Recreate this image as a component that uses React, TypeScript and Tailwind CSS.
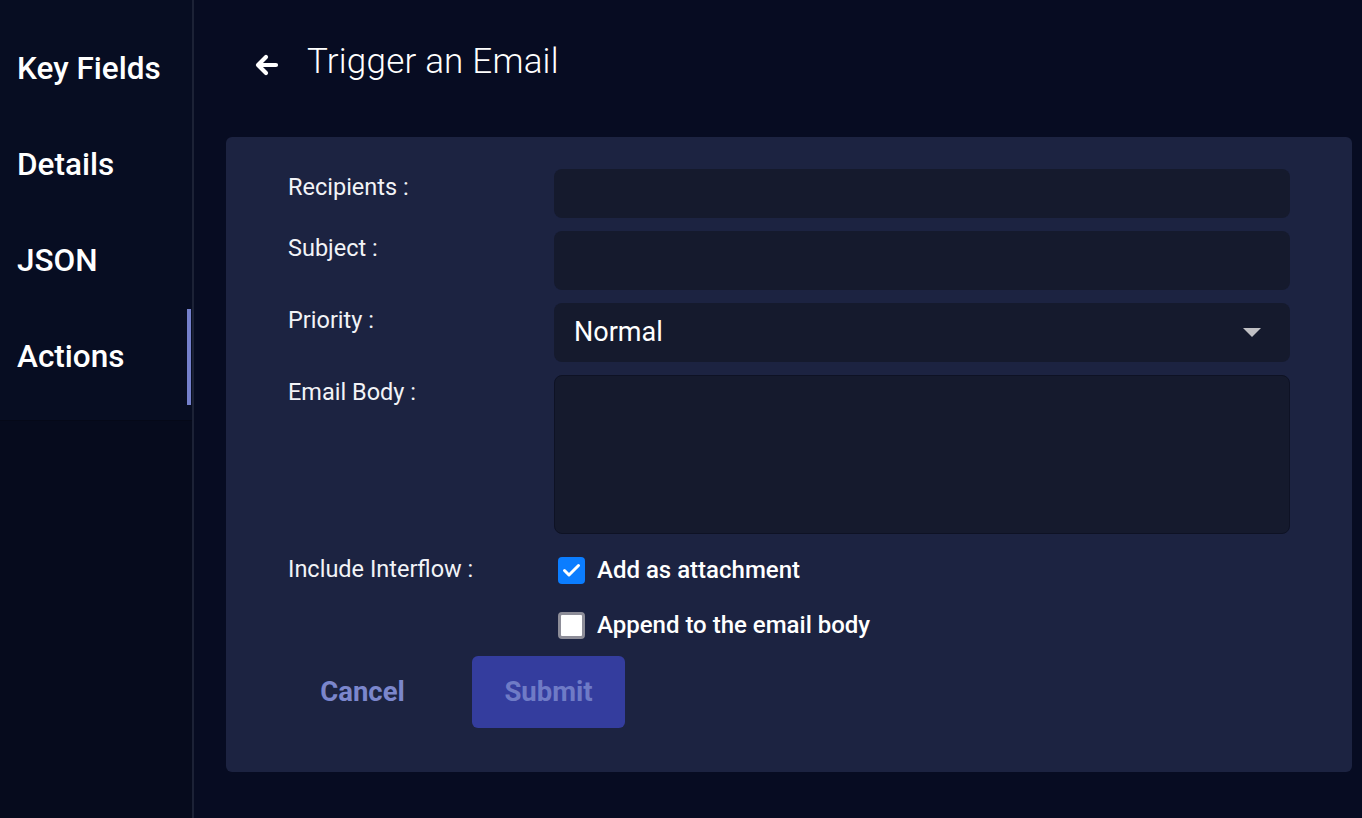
import React, { useState } from 'react';

const navItems = ['Key Fields', 'Details', 'JSON', 'Actions'];

function Check({ checked }: { checked: boolean }) {
  if (checked) {
    return (
      <span className="flex h-[27px] w-[27px] items-center justify-center rounded-[4px] bg-[#0b7dff]">
        <svg width="19" height="15" viewBox="0 0 19 15">
          <path d="M2.5 7.5 L7 12 L16.5 2.5" stroke="white" strokeWidth="3" fill="none" strokeLinecap="round" strokeLinejoin="round" />
        </svg>
      </span>
    );
  }
  return <span className="h-[27px] w-[27px] rounded-[4px] border-[3px] border-[#8d8d98] bg-white" />;
}

export default function App() {
  const [active, setActive] = useState('Actions');
  const [attach, setAttach] = useState(true);
  const [append, setAppend] = useState(false);

  return (
    <div className="flex min-h-[818px] w-full bg-[#070c22] text-white" style={{ fontFamily: 'Roboto, "Liberation Sans", sans-serif' }}>
      {/* Sidebar */}
      <aside className="w-[194px] shrink-0 border-r-2 border-[#1c2236] bg-[#060b1d]">
        <nav className="bg-[#070d22] pt-[21px] pb-[15px] border-b border-[#050918]">
          {navItems.map((item) => (
            <button
              key={item}
              onClick={() => setActive(item)}
              className="relative flex h-[96px] w-full items-center pl-[17px] text-left text-[31.5px] font-medium text-white"
            >
              {item}
              {active === item && (
                <span className="absolute right-[1px] top-0 h-full w-[4px] bg-[#7480cc]" />
              )}
            </button>
          ))}
        </nav>
      </aside>

      {/* Main */}
      <main className="flex-1 pl-[32px] pr-[10px]">
        <div className="mb-[15px] flex h-[122px] items-center pl-[29px] pt-[2px]">
          <svg width="24" height="22" viewBox="0 0 24 22" className="mt-[6px]">
            <path d="M11 3 L3 11 L11 19 M3.5 11 H21" stroke="white" strokeWidth="4.2" fill="none" strokeLinecap="round" strokeLinejoin="round" />
          </svg>
          <h1 className="ml-[28px] text-[35px] font-light tracking-[0.2px] text-white">Trigger an Email</h1>
        </div>

        <section className="rounded-[6px] bg-[#1c2341] px-[62px] pt-[32px] pb-[44px]">
          <div className="flex flex-col gap-[13px]">
            <div className="flex">
              <label className="w-[266px] shrink-0 pt-[5px] text-[23.5px] leading-[26px] text-[#f2f3f7]">Recipients :</label>
              <input className="h-[49px] flex-1 rounded-[8px] bg-[#151a2d] px-[20px] text-[22px] text-white outline-none" />
            </div>
            <div className="flex">
              <label className="w-[266px] shrink-0 pt-[4px] text-[23.5px] leading-[26px] text-[#f2f3f7]">Subject :</label>
              <input className="h-[59px] flex-1 rounded-[8px] bg-[#151a2d] px-[20px] text-[22px] text-white outline-none" />
            </div>
            <div className="flex">
              <label className="w-[266px] shrink-0 pt-[4px] text-[23.5px] leading-[26px] text-[#f2f3f7]">Priority :</label>
              <div className="flex h-[59px] flex-1 items-center justify-between rounded-[8px] bg-[#151a2d] pl-[20px] pr-[29px]">
                <span className="text-[27px] font-normal text-white">Normal</span>
                <svg width="18" height="9" viewBox="0 0 18 9">
                  <path d="M0 0 H18 L9 9 Z" fill="#c0c0c4" />
                </svg>
              </div>
            </div>
            <div className="flex">
              <label className="w-[266px] shrink-0 pt-[4px] text-[23.5px] leading-[26px] text-[#f2f3f7]">Email Body :</label>
              <textarea className="h-[159px] flex-1 resize-none rounded-[8px] border border-[#0e1224] bg-[#151a2d] px-[20px] py-[12px] text-[22px] text-white outline-none" />
            </div>
          </div>

          <div className="mt-[22px] flex">
            <label className="w-[266px] shrink-0 text-[23.5px] leading-[26px] text-[#f2f3f7]">Include Interflow :</label>
            <div className="flex flex-col gap-[27px] pl-[4px]">
              <button onClick={() => setAttach(!attach)} className="flex h-[28px] items-center gap-[12px]">
                <Check checked={attach} />
                <span className="text-[24px] font-medium leading-[28px] text-white">Add as attachment</span>
              </button>
              <button onClick={() => setAppend(!append)} className="flex h-[28px] items-center gap-[12px]">
                <Check checked={append} />
                <span className="text-[24px] font-medium leading-[28px] text-white">Append to the email body</span>
              </button>
            </div>
          </div>

          <div className="mt-[17px] flex gap-[33px]">
            <button className="-ml-[2px] h-[72px] w-[153px] rounded-[6px] text-[27.5px] font-bold text-[#7b86cc]">Cancel</button>
            <button disabled className="h-[72px] w-[153px] rounded-[6px] bg-[#343d9e] text-[27.5px] font-bold text-[#6f7bc6]">Submit</button>
          </div>
        </section>
      </main>
    </div>
  );
}
